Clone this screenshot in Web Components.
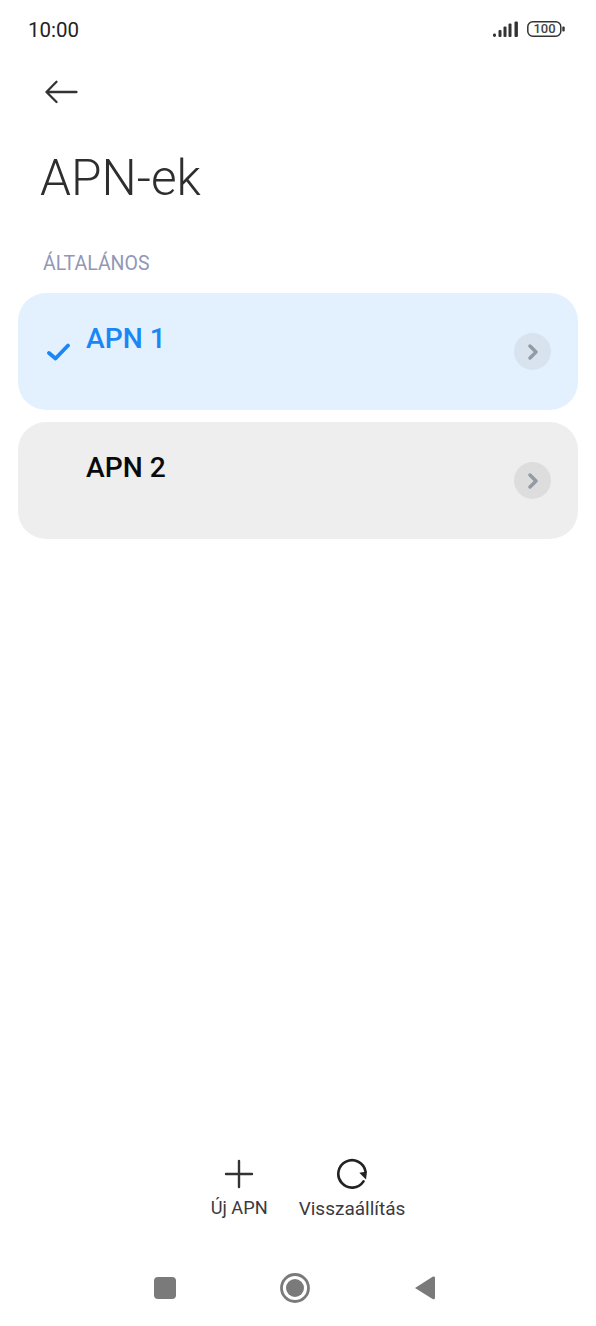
<!DOCTYPE html>
<html><head><meta charset="utf-8"><style>
html,body{margin:0;padding:0;background:#fff}
body{width:596px;height:1326px;font-family:Roboto,sans-serif}
app-screen{height:1326px}
</style></head><body>
<app-screen>
  <status-bar></status-bar>
  <back-bar></back-bar>
  <page-title>APN-ek</page-title>
  <section-label>ÁLTALÁNOS</section-label>
  <apn-list>
    <apn-row active>APN 1</apn-row>
    <apn-row>APN 2</apn-row>
  </apn-list>
  <action-bar></action-bar>
  <nav-bar></nav-bar>
</app-screen>
<script>
function def(name, html){
  customElements.define(name, class extends HTMLElement{
    constructor(){super();this.attachShadow({mode:'open'}).innerHTML=html;}
  });
}
def('app-screen',`<style>:host{display:flex;flex-direction:column;width:596px;height:1326px;overflow:hidden}
::slotted(action-bar){margin-top:auto}</style><slot></slot>`);
def('status-bar',`<style>:host{display:flex;align-items:center;justify-content:space-between;height:60px;padding:0 31px 0 28px;box-sizing:border-box;color:#222}
.t{font-size:20.500px;line-height:60px}
.r{display:flex;align-items:flex-start;height:16px;margin-top:-2px}
.b{position:relative;margin-left:8px;width:38px;height:16px}
.n{position:absolute;left:0;top:0;width:35px;text-align:center;font-size:13px;font-weight:500;line-height:16.500px;color:#444}
svg{display:block}</style>
<span class="t">10:00</span>
<span class="r">
<svg width="26" height="16" viewBox="0 0 26 16" fill="#333"><rect x="0" y="12.500" width="3" height="3.500" rx="1.400"/><rect x="5.500" y="9" width="3" height="7" rx="1"/><rect x="10.500" y="5.500" width="3" height="10.500" rx="1"/><rect x="15.500" y="2.500" width="3" height="13.500" rx="1"/><rect x="21.500" y=".500" width="3.400" height="15.500" rx="1"/></svg>
<span class="b"><svg width="38" height="16" viewBox="0 0 38 16"><rect x=".8" y=".8" width="33" height="14.400" rx="5" fill="none" stroke="#333" stroke-width="1.500"/><rect x="35.300" y="5.500" width="2.400" height="5" rx="1" fill="#333"/></svg><span class="n">100</span></span>
</span>`);
def('back-bar',`<style>:host{display:flex;align-items:center;height:64px;padding-left:45px}svg{display:block}</style>
<svg width="33" height="24" viewBox="0 0 33 24" fill="none" stroke="#333" stroke-width="2.300" stroke-linecap="round" stroke-linejoin="round"><path d="M1.500 12H31.500M11.500 1.800L1.500 12L11.500 22"/></svg>`);
def('page-title',`<style>:host{display:block;padding-left:40px;margin-top:24px;font-size:49.600px;font-weight:300;line-height:60px;color:#2e2e2e}</style><slot></slot>`);
def('section-label',`<style>:host{display:block;padding-left:43px;margin-top:44px;font-size:19.500px;line-height:24px;color:#9397b5}</style><slot></slot>`);
def('apn-list',`<style>:host{display:flex;flex-direction:column;gap:12px;margin:17px 18px 0}</style><slot></slot>`);
customElements.define('apn-row',class extends HTMLElement{
  constructor(){super();const a=this.hasAttribute('active');
  this.attachShadow({mode:'open'}).innerHTML=`<style>
  :host{display:flex;align-items:center;height:117px;border-radius:28px;padding:0 27px 0 29px;box-sizing:border-box;background:${a?'#e3f1ff':'#eeeeee'}}
  .c{width:39px;flex:none;display:flex}
  .l{flex:1;align-self:flex-start;padding-top:28px;font-size:28.200px;font-weight:500;line-height:36px;color:${a?'#1a87f5':'#0a0a0a'}}
  .g{width:37px;height:37px;border-radius:50%;background:${a?'#d8e3ef':'#dddddd'};display:flex;align-items:center;justify-content:center}
  svg{display:block}</style>
  <span class="c">${a?'<svg width="24" height="18" viewBox="0 0 24 18" fill="none" stroke="#1a87f5" stroke-width="3.800" stroke-linecap="round" stroke-linejoin="round"><path d="M2 10L8.500 15.500L21 2.500"/></svg>':''}</span>
  <span class="l"><slot></slot></span>
  <span class="g"><svg width="12" height="16" viewBox="0 0 12 16" fill="none" stroke="#939aa3" stroke-width="3.400" stroke-linecap="round" stroke-linejoin="round"><path d="M3 2L9 8L3 14"/></svg></span>`;}
});
def('action-bar',`<style>:host{display:flex;justify-content:center;align-items:flex-start;gap:31px;height:115px;padding-left:20px;color:#3a3a3e}
.a{display:flex;flex-direction:column;align-items:center}
svg{display:block}
.l{line-height:22px}</style>
<div class="a"><svg width="32" height="32" viewBox="0 0 32 32" fill="none" stroke="#333" stroke-width="2.400" stroke-linecap="round"><path d="M3 16H29M16 3V29"/></svg><span class="l" style="margin-top:7px;font-size:18.200px">Új APN</span></div>
<div class="a"><svg width="32" height="32" viewBox="0 0 32 32" fill="none" stroke="#222" stroke-width="2.600" stroke-linecap="round"><path d="M27.500 23.400A13.700 13.700 0 1 1 29.500 13.500"/><path d="M23.300 14.800L31 13.500L30 21.500Z" fill="#222" stroke="none"/></svg><span class="l" style="margin-top:8px;font-size:19px">Visszaállítás</span></div>`);
def('nav-bar',`<style>:host{display:flex;align-items:flex-start;justify-content:center;height:53px;padding-left:2px;box-sizing:border-box}
svg{display:block}</style>
<svg width="300" height="32" viewBox="0 0 300 32"><rect x="5" y="4" width="22" height="22" rx="4" fill="#7a7a7a"/><circle cx="146" cy="15" r="13.500" fill="none" stroke="#7a7a7a" stroke-width="2.800"/><circle cx="146" cy="15" r="9" fill="#7a7a7a"/><path d="M286 4.500V25a1.500 1.500 0 0 1-2.400 1L266 15L283.600 3.800A1.500 1.500 0 0 1 286 4.500Z" fill="#7a7a7a"/></svg>`);
</script>
</body></html>
